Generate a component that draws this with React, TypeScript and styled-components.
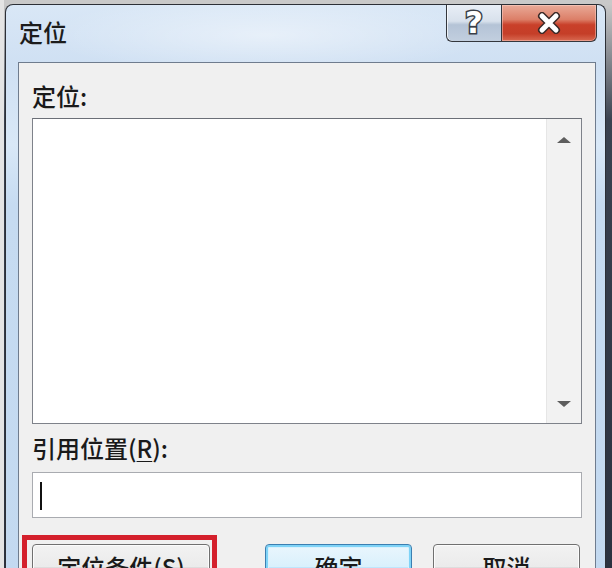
import React from "react";
import styled, { createGlobalStyle } from "styled-components";

const Global = createGlobalStyle`
  html, body { margin: 0; padding: 0; }
  body { font-family: "Noto Sans CJK SC", "Noto Sans", sans-serif; }
`;

const Page = styled.div`
  width: 612px;
  height: 568px;
  overflow: hidden;
  box-sizing: border-box;
  padding: 4px 0 0 5px;
  background:
    linear-gradient(90deg, #e4e4e4 0 4px, transparent 4px),
    linear-gradient(180deg, #c9c9c9 0 4px, #3a4250 120px, #2b3240 100%);
`;

const Window = styled.div`
  width: 601px;
  height: 600px;
  box-sizing: border-box;
  border: 1px solid #2c2f36;
  border-bottom: none;
  border-radius: 8px 8px 0 0;
  background:
    radial-gradient(ellipse 220px 40px at 260px 30px, rgba(255,255,255,0.45), transparent),
    linear-gradient(180deg, #d9e7f6 0px, #cfe0f3 60px, #d9e8f7 140px, #c6dbf1 200px, #c3d9f0 100%);
  display: flex;
  flex-direction: column;
`;

const TitleBar = styled.div`
  height: 57px;
  display: flex;
  justify-content: space-between;
  align-items: flex-start;
  flex-shrink: 0;
`;

const Title = styled.div`
  font-size: 24px;
  font-weight: 500;
  line-height: 30px;
  color: #1c1c1c;
  padding: 12px 0 0 13px;
`;

const Captions = styled.div`
  display: flex;
  margin-right: 8px;
`;

const CaptionButton = styled.div<{ $kind: "help" | "close" }>`
  height: 37px;
  box-sizing: border-box;
  border: 1px solid #34373d;
  border-top: none;
  display: flex;
  align-items: center;
  justify-content: center;
  ${(p) =>
    p.$kind === "help"
      ? `
    width: 55px;
    border-right: none;
    border-radius: 0 0 0 6px;
    background: linear-gradient(180deg, #e8eef6 0%, #d8e1ec 45%, #b4c3d6 55%, #c2cfdf 100%);
    box-shadow: inset 1px 0 0 rgba(255,255,255,0.7);
  `
      : `
    width: 96px;
    border-radius: 0 0 6px 0;
    background: linear-gradient(180deg, #e9aa98 0%, #dc7f68 40%, #c9402a 55%, #c53e28 80%, #d86a52 100%);
    box-shadow: inset 0 0 0 1px rgba(255,220,210,0.45);
  `}
`;

const HelpGlyph = styled.span`
  font-family: "DejaVu Sans", sans-serif;
  font-weight: bold;
  font-size: 31px;
  line-height: 1;
  color: #ffffff;
  -webkit-text-stroke: 3px #3a3f48;
  paint-order: stroke fill;
  margin-top: -1px;
`;

const Panel = styled.div`
  margin: 0 9px 0 12px;
  flex: 1;
  border: 1px solid #6f7c8e;
  background: #f0f0f0;
  padding: 18px 13px 0 13px;
  display: flex;
  flex-direction: column;
`;

const Label = styled.div<{ $gap?: number }>`
  font-size: 24px;
  font-weight: 500;
  line-height: 30px;
  color: #1a1a1a;
  margin-top: ${(p) => p.$gap ?? 0}px;
`;

const Mnemonic = styled.span`
  text-decoration: underline;
  text-underline-offset: 3px;
  text-decoration-thickness: 1px;
`;

const ListBox = styled.div`
  margin-top: 7px;
  height: 306px;
  box-sizing: border-box;
  border: 1px solid #7e828a;
  border-top-color: #6b6f77;
  background: #ffffff;
  display: flex;
`;

const ListContent = styled.div`
  flex: 1;
`;

const ScrollBar = styled.div`
  width: 34px;
  background: #f2f2f2;
  border-left: 1px solid #e6e6e6;
  display: flex;
  flex-direction: column;
  align-items: center;
  justify-content: space-between;
  padding: 18px 0 16px;
`;

const Arrow = styled.div<{ $dir: "up" | "down" }>`
  width: 0;
  height: 0;
  border-left: 7px solid transparent;
  border-right: 7px solid transparent;
  ${(p) =>
    p.$dir === "up"
      ? `border-bottom: 6px solid #5e5e5e;`
      : `border-top: 6px solid #5e5e5e;`}
`;

const Input = styled.div`
  margin-top: 9px;
  height: 46px;
  box-sizing: border-box;
  border: 1px solid #a9abb0;
  background: #ffffff;
  display: flex;
  align-items: center;
  padding-left: 7px;
`;

const Caret = styled.div`
  width: 2px;
  height: 28px;
  background: #111;
  margin-top: 2px;
`;

const ButtonRow = styled.div`
  margin-top: 26px;
  display: flex;
  gap: 21px;
`;

const Highlight = styled.div`
  position: relative;
  margin-right: 34px;
`;

const RedFrame = styled.div`
  position: absolute;
  top: -9px;
  left: -10px;
  right: -7px;
  bottom: -10px;
  border: 5px solid #d4202c;
  pointer-events: none;
`;

const Button = styled.div<{ $w: number; $default?: boolean }>`
  width: ${(p) => p.$w}px;
  height: 46px;
  box-sizing: border-box;
  border-radius: 4px;
  font-size: 24px;
  font-weight: 500;
  line-height: 44px;
  color: #1a1a1a;
  text-align: center;
  ${(p) =>
    p.$default
      ? `
    border: 1px solid #3c7fb1;
    background: linear-gradient(180deg, #eaf6fd 0%, #d9f0fc 50%, #bee6fd 50%, #a7d9f5 100%);
    box-shadow: inset 0 0 0 2px #7fd3f7, inset 0 0 0 3px #d8f1fd;
  `
      : `
    border: 1px solid #707070;
    background: linear-gradient(180deg, #f2f2f2 0%, #ebebeb 50%, #dddddd 50%, #cfcfcf 100%);
    box-shadow: inset 0 0 0 1px #fcfcfc;
  `}
`;

function CloseGlyph() {
  return (
    <svg width="26" height="22" viewBox="0 0 26 22">
      <g strokeLinecap="round">
        <path d="M6 4 L20 18 M20 4 L6 18" stroke="#3b2a28" strokeWidth="8" />
        <path d="M6 4 L20 18 M20 4 L6 18" stroke="#ffffff" strokeWidth="5" />
      </g>
    </svg>
  );
}

export default function App() {
  return (
    <>
      <Global />
      <Page>
        <Window>
          <TitleBar>
            <Title>定位</Title>
            <Captions>
              <CaptionButton $kind="help">
                <HelpGlyph>?</HelpGlyph>
              </CaptionButton>
              <CaptionButton $kind="close">
                <CloseGlyph />
              </CaptionButton>
            </Captions>
          </TitleBar>
          <Panel>
            <Label>定位:</Label>
            <ListBox>
              <ListContent />
              <ScrollBar>
                <Arrow $dir="up" />
                <Arrow $dir="down" />
              </ScrollBar>
            </ListBox>
            <Label $gap={9}>
              引用位置(<Mnemonic>R</Mnemonic>):
            </Label>
            <Input>
              <Caret />
            </Input>
            <ButtonRow>
              <Highlight>
                <Button $w={178}>定位条件(S)</Button>
                <RedFrame />
              </Highlight>
              <Button $w={147} $default>确定</Button>
              <Button $w={147}>取消</Button>
            </ButtonRow>
          </Panel>
        </Window>
      </Page>
    </>
  );
}
